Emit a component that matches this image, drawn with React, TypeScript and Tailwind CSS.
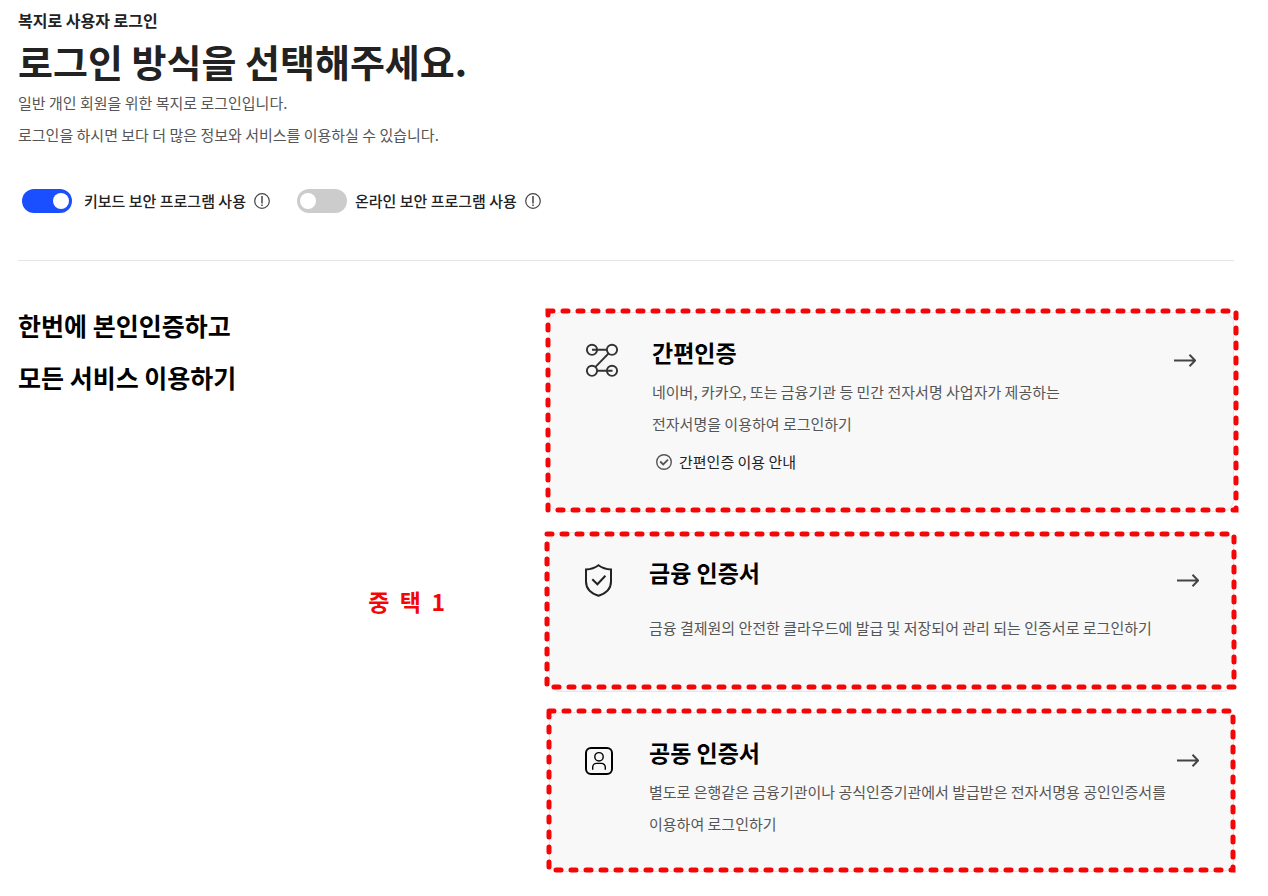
import type { ReactNode } from "react";

const ShareIcon = () => (
  <svg className="size-8 overflow-visible" viewBox="0 0 32 32" fill="none" stroke="#333" strokeWidth="1.9">
    <circle cx="6" cy="5.8" r="5.1" />
    <circle cx="26" cy="5.8" r="5.1" />
    <circle cx="6" cy="26.8" r="5.1" />
    <circle cx="26" cy="26.8" r="5.1" />
    <path d="M6 5.8h15M11 26.8h15.5M22.5 9.5L9.5 22.8" />
  </svg>
);

const ShieldIcon = () => (
  <svg className="size-8 overflow-visible" viewBox="0 0 32 32" fill="none" stroke="#222" strokeWidth="2">
    <path d="M13.5 1.2C10 3.8 6 5.2 1 5.5v12C1 24.5 6.5 29.5 13.5 31.8C20.5 29.5 26 24.5 26 17.5v-12C21 5.2 17 3.8 13.5 1.2Z" />
    <path d="M7.3 15.3l5.1 5l8-8.5" />
  </svg>
);

const PersonIcon = () => (
  <svg className="size-8 overflow-visible" viewBox="0 0 32 32" fill="none" stroke="#000">
    <rect x="1" y="4" width="26" height="26" rx="5" strokeWidth="2" />
    <circle cx="14" cy="12.8" r="4.2" strokeWidth="1.4" />
    <path d="M7.7 25.8v-2.6a3.8 3.8 0 0 1 3.8-3.8h5a3.8 3.8 0 0 1 3.8 3.8v2.6" strokeWidth="1.4" />
  </svg>
);

const ArrowIcon = () => (
  <svg className="h-6 w-[22px]" viewBox="0 0 22 24" fill="none" stroke="#444" strokeWidth="2">
    <path d="M0 12.5h21M15.5 6.8l5.7 5.7l-5.7 5.7" />
  </svg>
);

const InfoIcon = () => (
  <svg className="size-4" viewBox="0 0 16 16" fill="none" stroke="#444" strokeWidth="1.2">
    <circle cx="8" cy="8" r="7.3" />
    <path d="M8 3v7.5M8 11.5v1.5" strokeWidth="1.5" />
  </svg>
);

const CheckCircleIcon = () => (
  <svg className="size-4" viewBox="0 0 16 16" fill="none" stroke="#555" strokeWidth="1.4">
    <circle cx="8" cy="8" r="7.3" />
    <path d="M4.2 7.5l3 3l4.8-4.8" strokeWidth="1.8" />
  </svg>
);

const Toggle = ({ id, label, on, gap }: { id: string; label: string; on?: boolean; gap: string }) => (
  <div className="flex items-center">
    <input
      id={id}
      type="checkbox"
      role="switch"
      defaultChecked={on}
      className="flex h-6 w-[50px] shrink-0 cursor-pointer appearance-none items-center rounded-full bg-[#ccc] px-[3px] before:size-4 before:rounded-full before:bg-white checked:justify-end checked:bg-[#1a4fff]"
    />
    <label htmlFor={id} className={`${gap} text-[15px] leading-6 font-medium text-[#222]`}>
      {label}
    </label>
    <button type="button" aria-label={`${label} 안내`} className="ml-2">
      <InfoIcon />
    </button>
  </div>
);

type CardProps = {
  icon: ReactNode;
  title: string;
  padding: string;
  frame: string;
  children: ReactNode;
};

const LoginCard = ({ icon, title, padding, frame, children }: CardProps) => (
  <section className={`relative flex rounded-xl bg-[#f8f8f8] pt-6 ring-1 ring-[#e6e6e6] ring-inset ${padding}`}>
    <div className="mt-2 shrink-0">{icon}</div>
    <div className="min-w-0 flex-1">
      <div className="flex h-9 items-start justify-between">
        <h3 className="text-[23px] leading-8 font-bold text-black">{title}</h3>
        <a href="#" aria-label={title} className="self-end">
          <ArrowIcon />
        </a>
      </div>
      {children}
    </div>
    {/* dashed highlight drawn over the card edge */}
    <div className={`pointer-events-none absolute ${frame}`}>
      <svg className="size-full overflow-visible" fill="none">
        <rect width="100%" height="100%" stroke="#f50505" strokeWidth="5" strokeLinecap="round" strokeDasharray="5 10" />
      </svg>
    </div>
  </section>
);

export default function App() {
  return (
    <main className="bg-white pt-2 pr-[34px] pb-6 pl-[18px] font-['Noto_Sans_CJK_KR','Noto_Sans',sans-serif]">
      <header>
        <p className="text-base leading-6 font-bold text-[#222]">복지로 사용자 로그인</p>
        <h1 className="mt-[3px] text-[38px] leading-[52px] font-bold text-[#222]">로그인 방식을 선택해주세요.</h1>
        <p className="text-[15px] leading-8 text-[#555]">
          일반 개인 회원을 위한 복지로 로그인입니다.
          <br />
          로그인을 하시면 보다 더 많은 정보와 서비스를 이용하실 수 있습니다.
        </p>
      </header>

      <div className="mt-[38px] flex flex-wrap gap-x-[27px] gap-y-3 pl-1">
        <Toggle id="keyboard-security" label="키보드 보안 프로그램 사용" on gap="ml-3" />
        <Toggle id="online-security" label="온라인 보안 프로그램 사용" gap="ml-2" />
      </div>

      <hr className="mt-[47px] border-[#e5e5e5]" />

      <div className="mt-[38px] grid grid-cols-[531fr_685fr]">
        <div className="flex flex-col">
          <h2 className="text-[25px] leading-[52px] font-bold text-black">
            한번에 본인인증하고
            <br />
            모든 서비스 이용하기
          </h2>
          <p className="mt-[184px] mr-[104px] self-end text-[23px] leading-7 font-bold text-[#f50505]">
            중&nbsp; 택&nbsp; 1
          </p>
        </div>

        <div className="mt-[13px] flex flex-col gap-5">
          <LoginCard
            icon={<ShareIcon />}
            title="간편인증"
            padding="gap-[34px] pr-[38px] pb-[38px] pl-[37px]"
            frame="-top-px -right-0.5 bottom-0.5 -left-px"
          >
            <p className="mt-1 text-[15px] leading-8 text-[#555]">
              네이버, 카카오, 또는 금융기관 등 민간 전자서명 사업자가 제공하는
              <br />
              전자서명을 이용하여 로그인하기
            </p>
            <a href="#" className="mt-2.5 ml-1 flex items-center gap-[7px] text-[15px] leading-6 text-[#222]">
              <CheckCircleIcon />
              간편인증 이용 안내
            </a>
          </LoginCard>

          <LoginCard
            icon={<ShieldIcon />}
            title="금융 인증서"
            padding="gap-8 pr-[35px] pb-8 pl-9"
            frame="top-0.5 right-0 bottom-[5px] -left-0.5"
          >
            <p className="mt-1 py-4 text-[15px] leading-8 text-[#555]">
              금융 결제원의 안전한 클라우드에 발급 및 저장되어 관리 되는 인증서로 로그인하기
            </p>
          </LoginCard>

          <LoginCard
            icon={<PersonIcon />}
            title="공동 인증서"
            padding="gap-8 pr-[35px] pb-8 pl-9"
            frame="-top-px right-px bottom-0.5 left-0"
          >
            <p className="mt-1 text-[15px] leading-8 text-[#555]">
              별도로 은행같은 금융기관이나 공식인증기관에서 발급받은 전자서명용 공인인증서를
              <br />
              이용하여 로그인하기
            </p>
          </LoginCard>
        </div>
      </div>
    </main>
  );
}
